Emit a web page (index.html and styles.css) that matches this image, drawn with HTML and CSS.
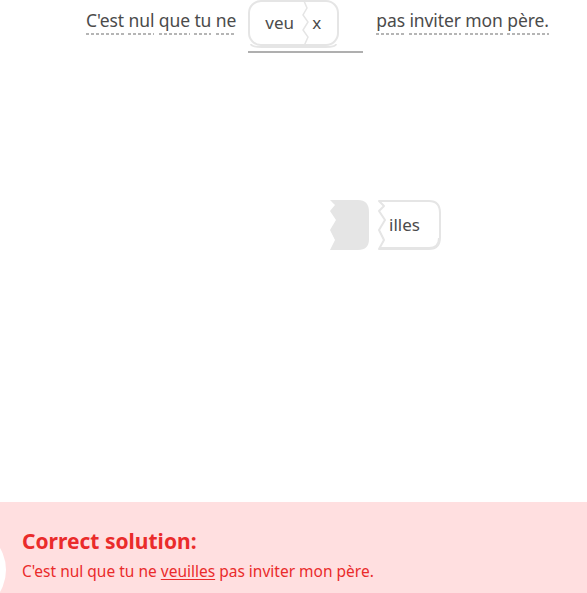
FILE: index.html
```html
<!DOCTYPE html>
<html lang="fr">
<head>
<meta charset="utf-8">
<title>Challenge</title>
<link rel="stylesheet" href="styles.css">
</head>
<body>
<main class="page">
  <div class="sentence">
    <span class="words"><span class="w">C'est</span> <span class="w">nul</span> <span class="w">que</span> <span class="w">tu</span> <span class="w">ne</span></span>
    <span class="slot">
      <span class="tile">
        <svg class="tile-bg" width="91" height="48" viewBox="0 0 91 48">
          <rect x="1" y="1" width="89" height="44" rx="12" fill="#fff" stroke="#e5e5e5" stroke-width="2"/>
          <path d="M3 44 Q3 47 14 47 L77 47 Q88 47 88 44" fill="none" stroke="#e5e5e5" stroke-width="2"/>
          <polyline points="56,1 59,8 55,15 60,22 55,30 60,37 56,46" fill="none" stroke="#e5e5e5" stroke-width="1.5"/>
        </svg>
        <span class="part part-a">veu</span>
        <span class="part part-b">x</span>
      </span>
    </span>
    <span class="words"><span class="w">pas</span> <span class="w">inviter</span> <span class="w">mon</span> <span class="w">père.</span></span>
  </div>

  <div class="bank">
    <span class="gap-piece">
      <svg width="40" height="51" viewBox="0 0 40 51">
        <path d="M0 0 L28 0 Q39 0 39 12 L39 39 Q39 50 28 50 L0 50 L5 40 L0 30 L6 20 L0 11 L5 5 Z" fill="#e5e5e5"/>
      </svg>
    </span>
    <span class="bank-tile">
      <svg class="tile-bg" width="65" height="51" viewBox="0 0 65 51">
        <path d="M2 1 L52 1 Q63 1 63 13 L63 37 Q63 49 52 49 L2 49 L7 40 L2 30 L8 20 L2 11 L7 6 Z" fill="#fff" stroke="#e5e5e5" stroke-width="2" stroke-linejoin="round"/>
        <path d="M3 48 L52 48 Q62 48 62 38" fill="none" stroke="#e5e5e5" stroke-width="2"/>
      </svg>
      <span class="part part-c">illes</span>
    </span>
  </div>

  <section class="banner">
    <span class="blob"></span>
    <h2 class="banner-title">Correct solution:</h2>
    <p class="banner-text">C'est nul que tu ne <u>veuilles</u> pas inviter mon père.</p>
  </section>
</main>
</body>
</html>
```

FILE: styles.css
```css
* { box-sizing: border-box; }
html, body { margin: 0; padding: 0; background: #fff; }
body {
  width: 587px;
  height: 593px;
  overflow: hidden;
  font-family: "Noto Sans", "DejaVu Sans", sans-serif;
  color: #4b4b4b;
}
.page {
  position: relative;
  height: 593px;
  display: flex;
  flex-direction: column;
}
.sentence {
  display: flex;
  align-items: flex-start;
  padding-left: 86px;
  height: 60px;
}
.words {
  font-size: 17.5px;
  line-height: 22px;
  padding-top: 9px;
  white-space: nowrap;
  letter-spacing: -0.1px;
}
.w {
  padding-bottom: 3px;
  background-image: repeating-linear-gradient(to right, #b5b5b5 0 3px, transparent 3px 5px);
  background-size: 100% 2px;
  background-repeat: no-repeat;
  background-position: left bottom;
}
.slot {
  width: 115px;
  height: 53px;
  margin: 0 13px 0 12px;
  border-bottom: 2px solid #afafaf;
  display: flex;
  align-items: flex-start;
}
.tile {
  position: relative;
  width: 91px;
  height: 48px;
  display: flex;
  align-items: center;
  font-size: 17px;
}
.tile-bg { position: absolute; left: 0; top: 0; }
.part { position: relative; }
.part-a { width: 56px; padding-left: 17px; padding-bottom: 3px; }
.part-b { padding-left: 8px; padding-bottom: 3px; }

.bank {
  display: flex;
  justify-content: flex-start;
  padding-left: 330px;
  margin-top: 140px;
  gap: 7px;
  height: 51px;
}
.gap-piece { display: block; height: 51px; }
.gap-piece svg { display: block; }
.bank-tile {
  position: relative;
  width: 65px;
  height: 51px;
  display: flex;
  align-items: center;
  font-size: 17px;
}
.part-c { padding-left: 12px; padding-bottom: 3px; }

.banner {
  position: relative;
  margin-top: auto;
  height: 91px;
  background: #ffdfe0;
  padding: 25px 22px 0;
  color: #ea2b2b;
  overflow: hidden;
}
.blob {
  position: absolute;
  left: -80px;
  top: 25px;
  width: 86px;
  height: 86px;
  border-radius: 50%;
  background: #fff;
}
.banner-title {
  position: relative;
  margin: 0;
  font-size: 21px;
  line-height: 28px;
  font-weight: 700;
}
.banner-text {
  position: relative;
  margin: 6px 0 0;
  font-size: 15.5px;
  line-height: 20px;
}
.banner-text u { text-underline-offset: 2px; }
```
